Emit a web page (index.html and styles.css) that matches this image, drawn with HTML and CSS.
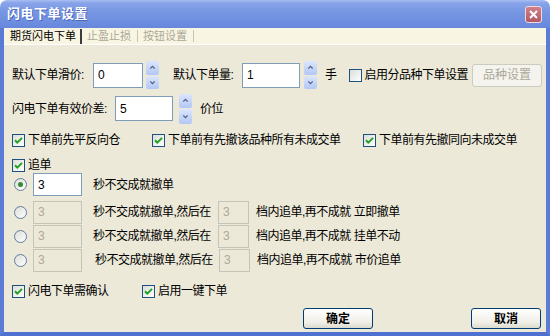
FILE: index.html
```html
<!DOCTYPE html>
<html lang="zh">
<head>
    <meta charset="UTF-8">
    <title>闪电下单设置</title>
    <link rel="stylesheet" href="styles.css">
</head>
<body>
    <div class="window">
        <div class="titlebar">
            <span class="title">闪电下单设置</span>
            <span class="close">
                <svg viewBox="0 0 13 13"><path d="M3 3 10 10 M10 3 3 10"/></svg>
            </span>
        </div>
        <div class="frame">
            <div class="tabs">
                <span class="tab active">期货闪电下单</span>
                <span class="sep dark"></span>
                <span class="tab">止盈止损</span>
                <span class="sep"></span>
                <span class="tab">按钮设置</span>
                <span class="sep"></span>
            </div>
            <div class="content">
                <div class="row r1">
                    <span class="label w-slip">默认下单滑价:</span>
                    <span class="field w-slip-in">0</span>
                    <span class="spin">
                        <span class="spin-btn"><svg viewBox="0 0 12 12"><path d="M3 7.5 6 4.5 9 7.5"/></svg></span>
                        <span class="spin-btn"><svg viewBox="0 0 12 12"><path d="M3 4.5 6 7.5 9 4.5"/></svg></span>
                    </span>
                    <span class="label w-qty">默认下单量:</span>
                    <span class="field w-qty-in">1</span>
                    <span class="spin spin-qty">
                        <span class="spin-btn"><svg viewBox="0 0 12 12"><path d="M3 7.5 6 4.5 9 7.5"/></svg></span>
                        <span class="spin-btn"><svg viewBox="0 0 12 12"><path d="M3 4.5 6 7.5 9 4.5"/></svg></span>
                    </span>
                    <span class="label unit">手</span>
                    <span class="check split-check"></span>
                    <span class="label check-text">启用分品种下单设置</span>
                    <span class="button disabled kind-btn">品种设置</span>
                </div>
                <div class="row r2">
                    <span class="label w-diff">闪电下单有效价差:</span>
                    <span class="field w-diff-in">5</span>
                    <span class="spin spin-diff">
                        <span class="spin-btn"><svg viewBox="0 0 12 12"><path d="M3 7.5 6 4.5 9 7.5"/></svg></span>
                        <span class="spin-btn"><svg viewBox="0 0 12 12"><path d="M3 4.5 6 7.5 9 4.5"/></svg></span>
                    </span>
                    <span class="label unit">价位</span>
                </div>
                <div class="row opts r3">
                    <span class="opt"><span class="check on"><svg viewBox="0 0 11 11"><path d="M2 5.3 4.3 7.6 9 2.9"/></svg></span><span class="label check-text">下单前先平反向仓</span></span>
                    <span class="opt"><span class="check on"><svg viewBox="0 0 11 11"><path d="M2 5.3 4.3 7.6 9 2.9"/></svg></span><span class="label check-text">下单前有先撤该品种所有未成交单</span></span>
                    <span class="opt"><span class="check on"><svg viewBox="0 0 11 11"><path d="M2 5.3 4.3 7.6 9 2.9"/></svg></span><span class="label check-text">下单前有先撤同向未成交单</span></span>
                </div>
                <div class="row r4">
                    <span class="opt"><span class="check on"><svg viewBox="0 0 11 11"><path d="M2 5.3 4.3 7.6 9 2.9"/></svg></span><span class="label check-text">追单</span></span>
                </div>
                <div class="row chase r5">
                    <span class="radio on"></span>
                    <span class="field sec">3</span>
                    <span class="label then">秒不交成就撤单</span>
                </div>
                <div class="row chase r6">
                    <span class="radio"></span>
                    <span class="field sec off">3</span>
                    <span class="label then w-then">秒不交成就撤单,然后在</span>
                    <span class="field tick off">3</span>
                    <span class="label after">档内追单,再不成就 立即撤单</span>
                </div>
                <div class="row chase r7">
                    <span class="radio"></span>
                    <span class="field sec off">3</span>
                    <span class="label then w-then">秒不交成就撤单,然后在</span>
                    <span class="field tick off">3</span>
                    <span class="label after">档内追单,再不成就 挂单不动</span>
                </div>
                <div class="row chase r8">
                    <span class="radio"></span>
                    <span class="field sec off">3</span>
                    <span class="label then w-then shift">秒不交成就撤单,然后在</span>
                    <span class="field tick off">3</span>
                    <span class="label after">档内追单,再不成就 市价追单</span>
                </div>
                <div class="row opts2 r9">
                    <span class="opt"><span class="check on"><svg viewBox="0 0 11 11"><path d="M2 5.3 4.3 7.6 9 2.9"/></svg></span><span class="label check-text">闪电下单需确认</span></span>
                    <span class="opt"><span class="check on"><svg viewBox="0 0 11 11"><path d="M2 5.3 4.3 7.6 9 2.9"/></svg></span><span class="label check-text">启用一键下单</span></span>
                </div>
                <div class="footer">
                    <span class="button">确定</span>
                    <span class="button">取消</span>
                </div>
            </div>
        </div>
    </div>
</body>
</html>
```

FILE: styles.css
```css
body {
    margin: 0;
    background: #ffffff;
    font-family: "Liberation Sans", "Noto Sans CJK SC", sans-serif;
    font-size: 12px;
    color: #000;
}
.window {
    width: 550px;
    height: 336px;
    display: flex;
    flex-direction: column;
}
.titlebar {
    height: 28px;
    flex: none;
    display: flex;
    align-items: center;
    padding: 0 8px 0 7px;
    border-radius: 7px 7px 0 0;
    background: linear-gradient(#a9bff3 0, #88a4e9 3px, #7796e2 12px, #6f8fe0 20px, #6687dc 28px);
}
.title {
    flex: 1;
    color: #fff;
    font-weight: bold;
    font-size: 13px;
    letter-spacing: 0.5px;
    line-height: 16px;
    text-shadow: 1px 1px 0 #4b67ba;
}
.close {
    width: 15px;
    height: 15px;
    border: 1px solid #f1dada;
    border-radius: 3px;
    background: linear-gradient(#d0808a, #b25864);
    display: flex;
    align-items: center;
    justify-content: center;
}
.close svg {
    width: 13px;
    height: 13px;
    stroke: #fff;
    stroke-width: 2;
}
.frame {
    flex: 1;
    display: flex;
    flex-direction: column;
    background: #ece9d8;
    border: 4px solid #5b7bd7;
    border-top: 0;
    border-bottom-color: #4e70d1;
}

/* 标签页 */
.tabs {
    height: 16px;
    flex: none;
    display: flex;
    align-items: center;
    padding-left: 6px;
    background: #f8f5e2;
    border-bottom: 1px solid #fff;
    font-size: 11px;
    line-height: 13px;
}
.tab {
    color: #aca899;
}
.tab.active {
    color: #000;
}
.sep {
    width: 1px;
    height: 12px;
    background: #c8c5b4;
    margin: 0 5px 0 6px;
}
.sep.dark {
    width: 2px;
    height: 15px;
    align-self: flex-end;
    background: #3c3c3c;
    margin: 0 5px 0 4px;
}

/* 内容 */
.content {
    flex: 1;
    display: flex;
    flex-direction: column;
    padding-left: 8px;
}
.row {
    display: flex;
    align-items: center;
    flex: none;
}
.label {
    line-height: 14px;
    white-space: nowrap;
    letter-spacing: -0.5px;
}
.field {
    height: 23px;
    box-sizing: border-box;
    border: 1px solid #7f9db9;
    background: #fff;
    padding-left: 4px;
    display: flex;
    align-items: center;
    line-height: 14px;
}
.field.off {
    background: #ece9d8;
    border-color: #c6c4b6;
    color: #aca899;
}
.spin {
    width: 13px;
    height: 28px;
    display: flex;
    flex-direction: column;
    gap: 1px;
    margin-left: 3px;
}
.spin-btn {
    flex: 1;
    display: flex;
    align-items: center;
    justify-content: center;
    border-radius: 2px;
    background: linear-gradient(#dce6fd, #b3c7f5);
}
.spin-btn svg {
    width: 9px;
    height: 9px;
    fill: none;
    stroke: #4d6185;
    stroke-width: 1.7;
}
.check {
    width: 11px;
    height: 11px;
    flex: none;
    border: 1px solid #1c5180;
    background: linear-gradient(135deg, #dcdcd7, #fff);
    display: inline-flex;
}
.check svg {
    width: 11px;
    height: 11px;
    fill: none;
    stroke: #21a121;
    stroke-width: 2;
}
.check-text {
    margin-left: 3px;
}
.radio {
    width: 11px;
    height: 11px;
    flex: none;
    margin-left: 2px;
    border: 1px solid #5f7ea3;
    border-radius: 50%;
    background: linear-gradient(135deg, #dcdcd7, #fff);
    position: relative;
}
.radio.on::after {
    content: '';
    position: absolute;
    left: 3px;
    top: 3px;
    width: 5px;
    height: 5px;
    border-radius: 50%;
    background: #2f8f2f;
}
.button {
    width: 70px;
    height: 21px;
    box-sizing: border-box;
    border: 1px solid #003c74;
    border-radius: 3px;
    background: linear-gradient(#ffffff, #f0efe8 70%, #dcdacd);
    display: flex;
    align-items: center;
    justify-content: center;
    font-weight: bold;
    line-height: 14px;
}
.button.disabled {
    border-color: #cdcbbe;
    background: #f4f3ee;
    color: #aca899;
    font-weight: normal;
}
.opt {
    display: flex;
    align-items: center;
}

/* 第一行 */
.r1 {
    margin-top: 16px;
    height: 28px;
}
.w-slip { width: 81px; }
.w-slip-in { width: 50px; height: 25px; }
.w-qty { width: 69px; margin-left: 14px; }
.w-qty-in { width: 58px; height: 25px; }
.spin-qty { margin-left: 4px; }
.unit { margin-left: 8px; }
.split-check { margin-left: 12px; }
.kind-btn {
    width: 70px;
    height: 23px;
    margin-left: 4px;
}

/* 第二行 */
.r2 {
    margin-top: 5px;
    height: 29px;
}
.w-diff { width: 103px; }
.w-diff-in { width: 58px; height: 25px; }
.spin-diff { margin-left: 6px; height: 30px; }

.opts {
    display: grid;
    grid-template-columns: 140px 211px auto;
}
.opts2 {
    display: grid;
    grid-template-columns: 130px auto;
}
.r3 { margin-top: 9px; height: 16px; }
.r4 { margin-top: 9px; height: 16px; }
.r5 { height: 23px; }
.r6 { margin-top: 4px; height: 24px; }
.r7 { height: 24px; }
.r8 { height: 24px; }
.r9 { margin-top: 11px; height: 16px; }

/* 追单 */
.sec {
    width: 49px;
    margin-left: 6px;
}
.then { margin-left: 11px; }
.w-then { width: 125px; }
.shift { margin-left: 13px; width: 124px; }
.tick { width: 31px; }
.after { margin-left: 7px; }

.footer {
    margin-top: 9px;
    display: flex;
    justify-content: flex-end;
    gap: 98px;
    padding-right: 5px;
}
```
